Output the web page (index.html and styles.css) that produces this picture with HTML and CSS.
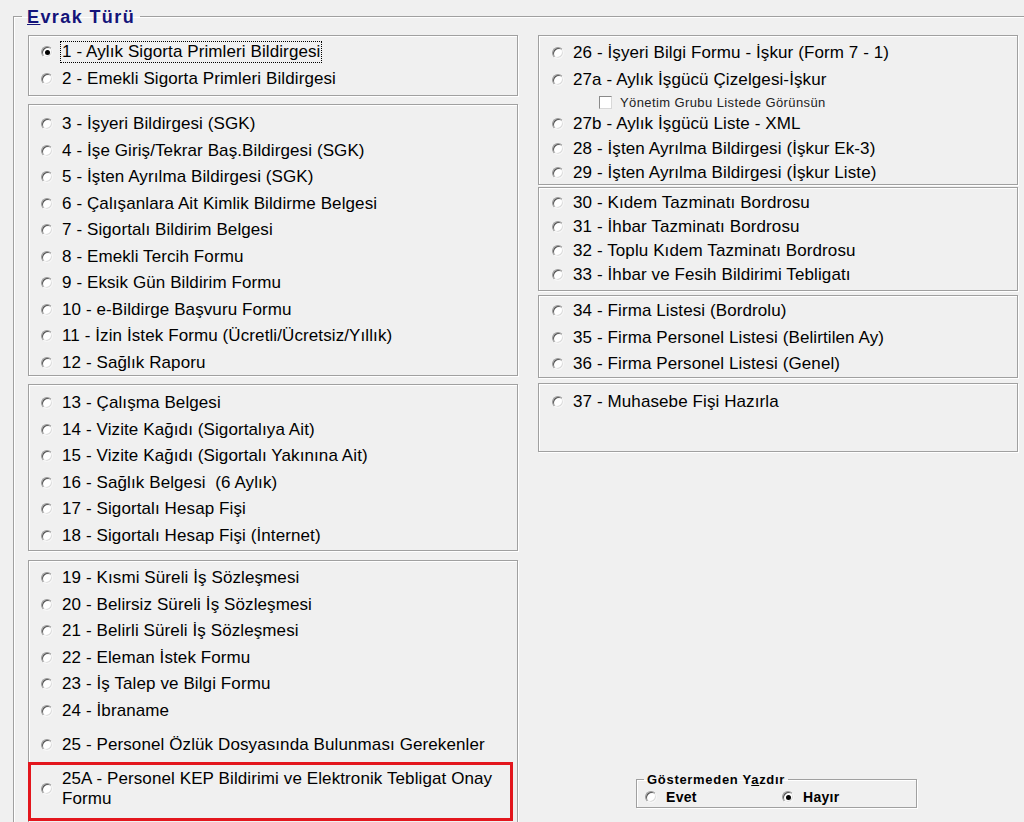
FILE: index.html
```html
<!DOCTYPE html>
<html>
<head>
  <title>Evrak Türü</title>
  <link rel="stylesheet" href="styles.css">
</head>
<body>
  <fieldset class="evrak">
    <legend class="evrak-title"><u>E</u>vrak Türü</legend>

    <div class="columns">
      <div class="col">
        <div class="box box-a">
          <div class="opt"><span class="radio checked"></span><span class="focus">1 - Aylık Sigorta Primleri Bildirgesi</span></div>
          <div class="opt"><span class="radio"></span>2 - Emekli Sigorta Primleri Bildirgesi</div>
        </div>

        <div class="box box-b">
          <div class="opt"><span class="radio"></span>3 - İşyeri Bildirgesi (SGK)</div>
          <div class="opt"><span class="radio"></span>4 - İşe Giriş/Tekrar Baş.Bildirgesi (SGK)</div>
          <div class="opt"><span class="radio"></span>5 - İşten Ayrılma Bildirgesi (SGK)</div>
          <div class="opt"><span class="radio"></span>6 - Çalışanlara Ait Kimlik Bildirme Belgesi</div>
          <div class="opt"><span class="radio"></span>7 - Sigortalı Bildirim Belgesi</div>
          <div class="opt"><span class="radio"></span>8 - Emekli Tercih Formu</div>
          <div class="opt"><span class="radio"></span>9 - Eksik Gün Bildirim Formu</div>
          <div class="opt"><span class="radio"></span>10 - e-Bildirge Başvuru Formu</div>
          <div class="opt"><span class="radio"></span>11 - İzin İstek Formu (Ücretli/Ücretsiz/Yıllık)</div>
          <div class="opt"><span class="radio"></span>12 - Sağlık Raporu</div>
        </div>

        <div class="box box-c">
          <div class="opt"><span class="radio"></span>13 - Çalışma Belgesi</div>
          <div class="opt"><span class="radio"></span>14 - Vizite Kağıdı (Sigortalıya Ait)</div>
          <div class="opt"><span class="radio"></span>15 - Vizite Kağıdı (Sigortalı Yakınına Ait)</div>
          <div class="opt"><span class="radio"></span>16 - Sağlık Belgesi&nbsp; (6 Aylık)</div>
          <div class="opt"><span class="radio"></span>17 - Sigortalı Hesap Fişi</div>
          <div class="opt"><span class="radio"></span>18 - Sigortalı Hesap Fişi (İnternet)</div>
        </div>

        <div class="box box-d">
          <div class="opt"><span class="radio"></span>19 - Kısmi Süreli İş Sözleşmesi</div>
          <div class="opt"><span class="radio"></span>20 - Belirsiz Süreli İş Sözleşmesi</div>
          <div class="opt"><span class="radio"></span>21 - Belirli Süreli İş Sözleşmesi</div>
          <div class="opt"><span class="radio"></span>22 - Eleman İstek Formu</div>
          <div class="opt"><span class="radio"></span>23 - İş Talep ve Bilgi Formu</div>
          <div class="opt"><span class="radio"></span>24 - İbraname</div>
          <div class="opt opt-spaced"><span class="radio"></span>25 - Personel Özlük Dosyasında Bulunması Gerekenler</div>
          <div class="opt-marked">
            <span class="radio"></span>
            <span class="marked-text">25A - Personel KEP Bildirimi ve Elektronik Tebligat Onay<br>Formu</span>
          </div>
        </div>
      </div>

      <div class="col">
        <div class="box box-e">
          <div class="opt"><span class="radio"></span>26 - İşyeri Bilgi Formu - İşkur (Form 7 - 1)</div>
          <div class="opt"><span class="radio"></span>27a - Aylık İşgücü Çizelgesi-İşkur</div>
          <div class="sub-check"><span class="checkbox"></span>Yönetim Grubu Listede Görünsün</div>
          <div class="opt"><span class="radio"></span>27b - Aylık İşgücü Liste - XML</div>
          <div class="opt opt-h23"><span class="radio"></span>28 - İşten Ayrılma Bildirgesi (İşkur Ek-3)</div>
          <div class="opt opt-h25"><span class="radio"></span>29 - İşten Ayrılma Bildirgesi (İşkur Liste)</div>
        </div>

        <div class="box box-f">
          <div class="opt opt-h24"><span class="radio"></span>30 - Kıdem Tazminatı Bordrosu</div>
          <div class="opt opt-h24"><span class="radio"></span>31 - İhbar Tazminatı Bordrosu</div>
          <div class="opt opt-h24"><span class="radio"></span>32 - Toplu Kıdem Tazminatı Bordrosu</div>
          <div class="opt opt-h24"><span class="radio"></span>33 - İhbar ve Fesih Bildirimi Tebligatı</div>
        </div>

        <div class="box box-g">
          <div class="opt"><span class="radio"></span>34 - Firma Listesi (Bordrolu)</div>
          <div class="opt"><span class="radio"></span>35 - Firma Personel Listesi (Belirtilen Ay)</div>
          <div class="opt"><span class="radio"></span>36 - Firma Personel Listesi (Genel)</div>
        </div>

        <div class="box box-h">
          <div class="opt"><span class="radio"></span>37 - Muhasebe Fişi Hazırla</div>
        </div>

        <fieldset class="yazdir">
          <legend class="yazdir-title">Göstermeden Y<u>a</u>zdır</legend>
          <div class="yazdir-opts">
            <div class="yazdir-opt"><span class="radio"></span>Evet</div>
            <div class="yazdir-opt"><span class="radio checked"></span>Hayır</div>
          </div>
        </fieldset>
      </div>
    </div>
  </fieldset>
</body>
</html>
```

FILE: styles.css
```css
html, body {
  margin: 0;
  height: 822px;
  overflow: hidden;
}

body {
  background-color: #f0f0f0;
  font-family: "Liberation Sans", Arial, sans-serif;
  font-size: 17px;
  color: #000;
}

.evrak {
  margin: 5px 0 0 13px;
  padding: 8px 0 0 14px;
  width: 1100px;
  height: 900px;
  box-sizing: border-box;
  border: 1px solid #a0a0a0;
  border-right: none;
  border-bottom: none;
  box-shadow: inset 1px 1px 0 #fff;
}

.evrak-title {
  margin-left: -6px;
  padding: 2px 5px 0 5px;
  font-size: 18px;
  line-height: 20px;
  font-weight: bold;
  letter-spacing: 1.4px;
  color: #14147a;
}

.columns {
  display: grid;
  grid-template-columns: 490px 480px;
  column-gap: 20px;
  align-items: start;
}

.col {
  display: flex;
  flex-direction: column;
}

.box {
  box-sizing: border-box;
  border: 1px solid #a0a0a0;
  box-shadow: inset 1px 1px 0 #fff, 1px 1px 0 #fff;
}

/* left column */
.box-a { height: 61px; padding-top: 3px; }
.box-b { height: 272px; padding-top: 6px; margin-top: 8px; }
.box-c { height: 167px; padding-top: 5px; margin-top: 8px; }
.box-d { height: 300px; padding-top: 4px; margin-top: 9px; }

/* right column */
.box-e { height: 150px; padding-top: 4px; }
.box-f { height: 104px; padding-top: 3px; margin-top: 2px; }
.box-g { height: 83px; padding-top: 2px; margin-top: 4px; }
.box-h { height: 69px; padding-top: 5px; margin-top: 5px; }

.opt {
  display: flex;
  align-items: center;
  height: 26.5px;
  padding-left: 12px;
  letter-spacing: 0.1px;
  white-space: nowrap;
}

.col + .col .opt {
  padding-left: 13px;
}

.opt-h23 { height: 23px; }
.opt-h24 { height: 24px; }
.opt-h25 { height: 25px; }

.opt-spaced {
  margin-top: 8px;
}

.radio {
  position: relative;
  flex: none;
  width: 12px;
  height: 12px;
  margin-right: 9px;
  box-sizing: border-box;
  border-radius: 50%;
  background-color: #fff;
  border: 1px solid;
  border-color: #9a9a9a #f6f6f6 #f6f6f6 #9a9a9a;
  box-shadow: inset 1px 1px 0 #555, inset -1px -1px 0 #dcdcdc;
}

.radio.checked::after {
  content: "";
  position: absolute;
  left: 2.5px;
  top: 2.5px;
  width: 5px;
  height: 5px;
  border-radius: 50%;
  background-color: #000;
}

.focus {
  outline: 1px dotted #000;
  outline-offset: 0;
  padding: 0 1px;
  margin-left: -1px;
}

.opt-marked {
  display: flex;
  align-items: center;
  width: 485px;
  height: 59px;
  margin: 3px 0 0 -1px;
  padding: 0 0 5px 10px;
  box-sizing: border-box;
  border: 3px solid #e3161d;
  letter-spacing: 0.1px;
}

.marked-text {
  line-height: 20px;
}

.sub-check {
  display: flex;
  align-items: center;
  height: 18px;
  padding-left: 60px;
  font-size: 13px;
  letter-spacing: 0.4px;
  color: #222;
}

.checkbox {
  flex: none;
  width: 13px;
  height: 13px;
  margin-right: 8px;
  box-sizing: border-box;
  background-color: #fff;
  border: 1px solid;
  border-color: #8a8a8a #d8d8d8 #d8d8d8 #8a8a8a;
}

.yazdir {
  margin: 320px 0 0 98px;
  padding: 0;
  width: 281px;
  box-sizing: border-box;
  border: 1px solid #a0a0a0;
  box-shadow: inset 1px 1px 0 #fff, 1px 1px 0 #fff;
}

.yazdir-title {
  margin-left: 7px;
  padding: 0 3px;
  font-size: 13px;
  line-height: 15px;
  font-weight: bold;
  letter-spacing: 0.7px;
}

.yazdir-opts {
  display: grid;
  grid-template-columns: 137px auto;
  height: 20px;
  padding-left: 8px;
}

.yazdir-opt {
  display: flex;
  align-items: center;
  font-size: 14px;
  font-weight: bold;
  letter-spacing: 0.3px;
}
```
